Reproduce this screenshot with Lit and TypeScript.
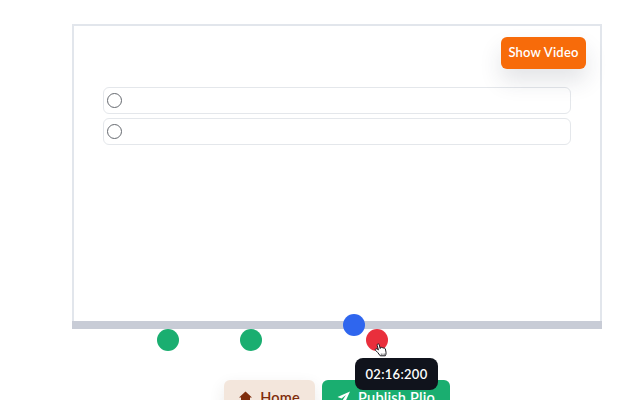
import { LitElement, css, html, svg } from "lit";
import { customElement } from "lit/decorators.js";

const homeIcon = svg`<path d="M6.5 .5 13 6.5H11V13H2V6.5H0Z" fill="currentColor"/>`;
const planeIcon = svg`<path d="M13 .5 .5 6 4.500 7.500 9 4 6 8.500 7.400 12.800Z" fill="currentColor"/>`;
const handIcon = svg`<path d="M3.500 1.200c.8-.6 1.600-.2 1.800.7l.9 3.600.3-.9c.7-.5 1.400-.3 1.600.4.6-.6 1.400-.4 1.700.3.7-.4 1.400 0 1.600.7l.6 3.200c.2 1.400 0 2.600-.7 3.600H6.200L3.800 9.600 1.600 7.400c-.5-.6-.4-1.300.3-1.600.6-.2 1.300 0 1.900.6l.6.5L3.200 2.400c-.1-.5 0-.9.3-1.200Z" fill="#fff" stroke="#1a1a1f" stroke-width="1"/><path d="M7.300 10.500v2.500M9 10.500v2.500M10.700 10.500v2.500" stroke="#55555c" stroke-width=".8" fill="none"/>`;

@customElement("app-root")
export class AppRoot extends LitElement {
  static styles = css`
    :host {
      display: block;
      position: relative;
      height: 400px;
      overflow: hidden;
      background: #fff;
      font-family: Lato, "Open Sans", sans-serif;
    }

    .page {
      display: flex;
      flex-direction: column;
      align-items: flex-start;
      padding: 24px 38px 0 72px;
    }

    .stage {
      position: relative;
      box-sizing: border-box;
      width: 530px;
      height: 298px;
      border: 2px solid #e2e6ec;
      border-bottom: 0;
      padding: 61px 29px 0;
    }

    .answers {
      display: flex;
      flex-direction: column;
      gap: 4px;
    }

    .answer {
      box-sizing: border-box;
      display: flex;
      align-items: center;
      height: 27px;
      padding: 0 0 0 3px;
      border: 1px solid #e4e7eb;
      border-radius: 6px;
    }

    .radio {
      box-sizing: border-box;
      width: 15px;
      height: 15px;
      border: 1.5px solid #65696f;
      border-radius: 50%;
    }

    .show-video {
      position: absolute;
      top: 11px;
      right: 14px;
      width: 85px;
      height: 32px;
      padding: 0 0 3px;
      border: 0;
      border-radius: 6px;
      background: #f76b0a;
      color: #fff;
      font: 600 13px Lato, sans-serif;
      letter-spacing: 0.2px;
      box-shadow: 0 12px 22px rgba(40, 50, 70, 0.13);
    }

    .timeline {
      position: relative;
      width: 530px;
      height: 8px;
      margin-top: -1px;
      background: #c8ccd6;
    }

    .dot {
      position: absolute;
      width: 22px;
      height: 22px;
      border-radius: 50%;
    }

    .dot.green {
      top: 8px;
      background: #1aae70;
    }

    .dot.blue {
      top: -7px;
      left: 271px;
      background: #2f66ee;
    }

    .dot.red {
      top: 8px;
      left: 294px;
      background: #e92f3c;
    }

    .tooltip {
      position: absolute;
      top: 37px;
      left: 283px;
      z-index: 2;
      display: flex;
      align-items: center;
      justify-content: center;
      width: 83px;
      height: 32px;
      border-radius: 8px;
      background: #10131c;
      color: #fff;
      font: 600 13px Lato, sans-serif;
      letter-spacing: 0.3px;
    }

    .cursor {
      position: absolute;
      top: 22px;
      left: 302px;
      z-index: 3;
      width: 14px;
      height: 16px;
    }

    .actions {
      display: flex;
      gap: 7px;
      margin: 51px 0 0 152px;
    }

    .action {
      display: flex;
      align-items: center;
      justify-content: center;
      gap: 8px;
      height: 36px;
      padding: 0 0 2px;
      border: 0;
      border-radius: 6px;
      font: 600 14.5px Lato, sans-serif;
      letter-spacing: 0.2px;
    }

    .action svg {
      width: 13px;
      height: 13px;
    }

    .home {
      width: 91px;
      background: #f3e6dc;
      color: #7f2d0c;
      box-shadow: 0 6px 16px rgba(60, 50, 40, 0.1);
    }

    .publish {
      width: 128px;
      background: #1aae70;
      color: #fff;
    }
  `;

  render() {
    return html`
      <div class="page">
        <section class="stage">
          <div class="answers">
            <div class="answer"><span class="radio"></span></div>
            <div class="answer"><span class="radio"></span></div>
          </div>
          <button class="show-video">Show Video</button>
        </section>
        <div class="timeline">
          <span class="dot green" style="left: 85px"></span>
          <span class="dot green" style="left: 168px"></span>
          <span class="dot blue"></span>
          <span class="dot red"></span>
          <svg class="cursor" viewBox="0 0 14 16">${handIcon}</svg>
          <div class="tooltip">02:16:200</div>
        </div>
        <div class="actions">
          <button class="action home"><svg viewBox="0 0 13 13">${homeIcon}</svg>Home</button>
          <button class="action publish"><svg viewBox="0 0 13 13">${planeIcon}</svg>Publish Plio</button>
        </div>
      </div>
    `;
  }
}
